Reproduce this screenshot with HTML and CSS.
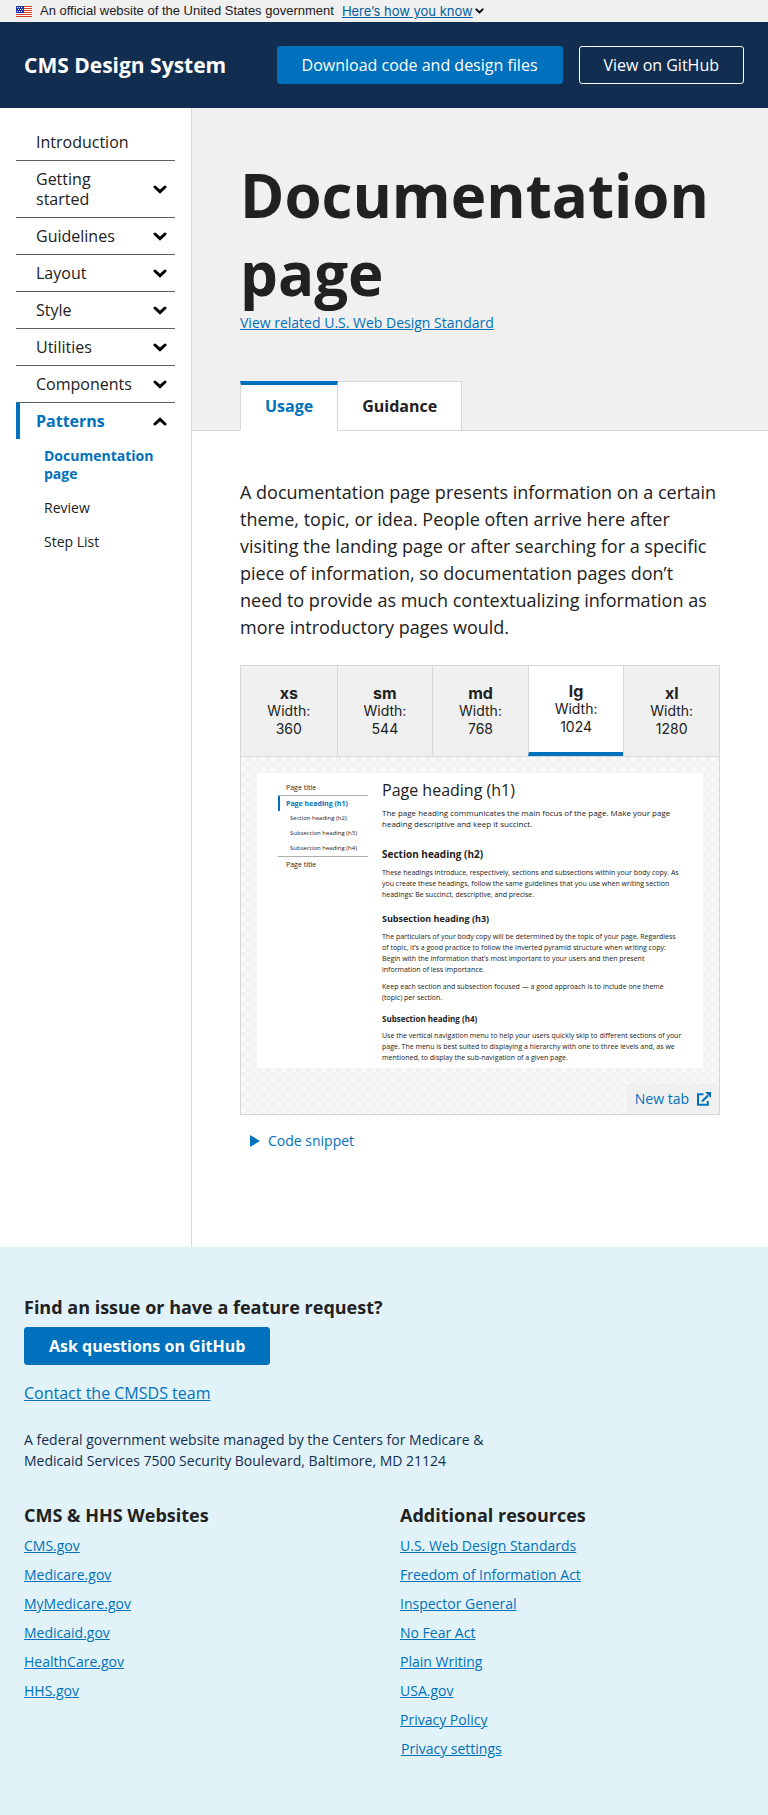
FILE: index.html
```html
<!DOCTYPE html>
<html lang="en">
<head>
<meta charset="utf-8">
<meta name="viewport" content="width=device-width, initial-scale=1">
<title>Documentation page - CMS Design System</title>
<link rel="stylesheet" href="styles.css">
</head>
<body>
<svg class="sprite" aria-hidden="true">
  <symbol id="chevron" viewBox="0 0 14 9"><path d="M2 2l5 4.6L12 2" fill="none" stroke="currentColor" stroke-width="3" stroke-linecap="round" stroke-linejoin="miter"/></symbol>
</svg>

<section class="gov-banner" aria-label="Official government website">
  <svg class="flag" viewBox="0 0 16 11" aria-hidden="true">
    <path fill="#fff" d="M0 0h16v11H0z"/>
    <path fill="#db3e1f" d="M8 0h8v1H8zM8 2h8v1H8zM8 4h8v1H8zM8 6h8v1H8zM0 8h16v1H0zM0 10h16v1H0z"/>
    <path fill="#1e33b1" d="M0 0h8v7H0z"/>
    <path fill="#fff" d="M1 1h1v1H1zM3 1h1v1H3zM5 1h1v1H5zM2 3h1v1H2zM4 3h1v1H4zM6 3h1v1H6zM1 5h1v1H1zM3 5h1v1H3zM5 5h1v1H5z"/>
  </svg>
  <span>An official website of the United States government</span>
  <button class="banner-button" type="button"><span>Here’s how you know</span><svg class="banner-chevron" aria-hidden="true"><use href="#chevron"/></svg></button>
</section>

<header class="site-header">
  <a class="site-title" href="#">CMS Design System</a>
  <div class="header-actions">
    <a class="button button-solid" href="#">Download code and design files</a>
    <a class="button button-outline" href="#">View on GitHub</a>
  </div>
</header>

<div class="layout">
  <nav class="sidebar" aria-label="Main">
    <ul class="nav-list">
      <li><a class="nav-item" href="#">Introduction</a></li>
      <li><button class="nav-item" type="button"><span>Getting started</span><svg class="chevron" aria-hidden="true"><use href="#chevron"/></svg></button></li>
      <li><button class="nav-item" type="button"><span>Guidelines</span><svg class="chevron" aria-hidden="true"><use href="#chevron"/></svg></button></li>
      <li><button class="nav-item" type="button"><span>Layout</span><svg class="chevron" aria-hidden="true"><use href="#chevron"/></svg></button></li>
      <li><button class="nav-item" type="button"><span>Style</span><svg class="chevron" aria-hidden="true"><use href="#chevron"/></svg></button></li>
      <li><button class="nav-item" type="button"><span>Utilities</span><svg class="chevron" aria-hidden="true"><use href="#chevron"/></svg></button></li>
      <li><button class="nav-item" type="button"><span>Components</span><svg class="chevron" aria-hidden="true"><use href="#chevron"/></svg></button></li>
      <li>
        <button class="nav-item nav-current" type="button" aria-expanded="true"><span>Patterns</span><svg class="chevron chevron-up" aria-hidden="true"><use href="#chevron"/></svg></button>
        <ul class="subnav">
          <li><a class="subnav-item subnav-current" href="#" aria-current="page">Documentation page</a></li>
          <li><a class="subnav-item" href="#">Review</a></li>
          <li><a class="subnav-item" href="#">Step List</a></li>
        </ul>
      </li>
    </ul>
  </nav>

  <main class="main">
    <div class="page-header">
      <h1 class="page-title">Documentation page</h1>
      <p class="related"><a href="#">View related U.S. Web Design Standard</a></p>
      <div class="tabs" role="tablist">
        <a class="tab tab-selected" role="tab" aria-selected="true" href="#">Usage</a>
        <a class="tab" role="tab" aria-selected="false" href="#">Guidance</a>
      </div>
    </div>
    <div class="page-body">
      <p class="lead">A documentation page presents information on a certain theme, topic, or idea. People often arrive here after visiting the landing page or after searching for a specific piece of information, so documentation pages don’t need to provide as much contextualizing information as more introductory pages would.</p>

      <section class="example" aria-label="Responsive example">
        <div class="breakpoints">
          <button class="breakpoint" type="button"><strong>xs</strong><span>Width: 360</span></button>
          <button class="breakpoint" type="button"><strong>sm</strong><span>Width: 544</span></button>
          <button class="breakpoint" type="button"><strong>md</strong><span>Width: 768</span></button>
          <button class="breakpoint breakpoint-selected" type="button"><strong>lg</strong><span>Width: 1024</span></button>
          <button class="breakpoint" type="button"><strong>xl</strong><span>Width: 1280</span></button>
        </div>
        <div class="stage">
          <div class="preview">
            <ul class="preview-nav">
              <li><a class="preview-link" href="#">Page title</a></li>
              <li class="preview-group">
                <a class="preview-link preview-current" href="#">Page heading (h1)</a>
                <ul class="preview-subnav">
                  <li><a href="#">Section heading (h2)</a></li>
                  <li><a href="#">Subsection heading (h3)</a></li>
                  <li><a href="#">Subsection heading (h4)</a></li>
                </ul>
              </li>
              <li><a class="preview-link" href="#">Page title</a></li>
            </ul>
            <article class="preview-article">
              <h2 class="preview-h1">Page heading (h1)</h2>
              <p class="preview-lead">The page heading communicates the main focus of the page. Make your page heading descriptive and keep it succinct.</p>
              <h3 class="preview-h2">Section heading (h2)</h3>
              <p>These headings introduce, respectively, sections and subsections within your body copy. As you create these headings, follow the same guidelines that you use when writing section headings: Be succinct, descriptive, and precise.</p>
              <h4 class="preview-h3">Subsection heading (h3)</h4>
              <p>The particulars of your body copy will be determined by the topic of your page. Regardless of topic, it’s a good practice to follow the inverted pyramid structure when writing copy: Begin with the information that’s most important to your users and then present information of less importance.</p>
              <p>Keep each section and subsection focused — a good approach is to include one theme (topic) per section.</p>
              <h5 class="preview-h4">Subsection heading (h4)</h5>
              <p>Use the vertical navigation menu to help your users quickly skip to different sections of your page. The menu is best suited to displaying a hierarchy with one to three levels and, as we mentioned, to display the sub-navigation of a given page.</p>
            </article>
          </div>
          <a class="new-tab" href="#">New tab
            <svg class="new-tab-icon" viewBox="0 0 14 14" aria-hidden="true"><path d="M6.500 2.200H1v10.600h9.800V9" fill="none" stroke="currentColor" stroke-width="2"/><path d="M5 9.500l6-6" stroke="currentColor" stroke-width="2.200"/><path d="M8 0h6v6z" fill="currentColor"/></svg>
          </a>
        </div>
      </section>

      <button class="snippet" type="button"><svg class="snippet-icon" viewBox="0 0 10 12" aria-hidden="true"><path d="M0 0l10 6-10 6z" fill="currentColor"/></svg>Code snippet</button>
    </div>
  </main>
</div>

<footer class="footer">
  <h2 class="footer-heading">Find an issue or have a feature request?</h2>
  <a class="button button-solid button-bold" href="#">Ask questions on GitHub</a>
  <p class="contact"><a href="#">Contact the CMSDS team</a></p>
  <p class="address">A federal government website managed by the Centers for Medicare &amp; Medicaid Services 7500 Security Boulevard, Baltimore, MD 21124</p>
  <div class="footer-columns">
    <div>
      <h2 class="footer-heading">CMS &amp; HHS Websites</h2>
      <ul class="footer-links">
        <li><a href="#">CMS.gov</a></li>
        <li><a href="#">Medicare.gov</a></li>
        <li><a href="#">MyMedicare.gov</a></li>
        <li><a href="#">Medicaid.gov</a></li>
        <li><a href="#">HealthCare.gov</a></li>
        <li><a href="#">HHS.gov</a></li>
      </ul>
    </div>
    <div>
      <h2 class="footer-heading">Additional resources</h2>
      <ul class="footer-links">
        <li><a href="#">U.S. Web Design Standards</a></li>
        <li><a href="#">Freedom of Information Act</a></li>
        <li><a href="#">Inspector General</a></li>
        <li><a href="#">No Fear Act</a></li>
        <li><a href="#">Plain Writing</a></li>
        <li><a href="#">USA.gov</a></li>
        <li><a href="#">Privacy Policy</a></li>
        <li><button class="link-button" type="button">Privacy settings</button></li>
      </ul>
    </div>
  </div>
</footer>
</body>
</html>
```

FILE: styles.css
```css
:root {
  --blue: #0071bc;
  --navy: #112e51;
  --ink: #212121;
  --gray: #f0f0f0;
  --line: #d6d7d9;
}

*,
*::before,
*::after {
  box-sizing: border-box;
}

body {
  margin: 0;
  background: #fff;
  color: var(--ink);
  font-family: "Open Sans", sans-serif;
  font-size: 16px;
  line-height: 24px;
}

h1, h2, h3, h4, h5, p, ul {
  margin: 0;
  padding: 0;
}

ul {
  list-style: none;
}

a {
  color: var(--blue);
}

button {
  margin: 0;
  padding: 0;
  border: 0;
  background: none;
  color: inherit;
  font: inherit;
  cursor: pointer;
}

.sprite {
  display: none;
}

/* Government banner */
.gov-banner {
  display: flex;
  align-items: center;
  gap: 8px;
  min-height: 22px;
  padding: 0 16px;
  background: var(--gray);
  font-family: "Liberation Sans", Arial, sans-serif;
  font-size: 13px;
  line-height: 22px;
}

.flag {
  flex: none;
  width: 16px;
  height: 11px;
}

.banner-button {
  display: flex;
  align-items: center;
  gap: 2px;
  color: #000;
  font-family: Inter, sans-serif;
}

.banner-button span {
  color: #005ea2;
  text-decoration: underline;
}

.banner-chevron {
  width: 9px;
  height: 6px;
}

/* Header */
.site-header {
  display: flex;
  align-items: center;
  justify-content: space-between;
  gap: 16px;
  padding: 24px;
  background: var(--navy);
}

.site-title {
  color: #fff;
  font-size: 21px;
  font-weight: 700;
  text-decoration: none;
}

.header-actions {
  display: flex;
  gap: 16px;
}

.button {
  display: inline-block;
  padding: 8px 24px;
  border: 1px solid var(--blue);
  border-radius: 3px;
  color: #fff;
  font-size: 16px;
  line-height: 20px;
  text-decoration: none;
}

.button-solid {
  background: var(--blue);
}

.button-outline {
  border-color: #fff;
}

.button-bold {
  font-weight: 700;
}

/* Page layout */
.layout {
  display: grid;
  grid-template-columns: 192px minmax(0, 1fr);
}

.sidebar {
  padding: 16px 16px 0;
  border-right: 1px solid var(--line);
}

.nav-list > li + li {
  border-top: 1px solid #5b616b;
}

.nav-item {
  display: flex;
  align-items: center;
  justify-content: space-between;
  gap: 16px;
  width: 100%;
  padding: 8px 8px 8px 20px;
  color: var(--ink);
  line-height: 20px;
  text-align: left;
  text-decoration: none;
}

.nav-current {
  padding-left: 16px;
  border-left: 4px solid var(--blue);
  color: var(--blue);
  font-weight: 700;
}

.chevron {
  flex: none;
  width: 14px;
  height: 9px;
  color: #000;
}

.chevron-up {
  transform: rotate(180deg);
}

.subnav {
  padding-top: 0;
}

.subnav-item {
  display: block;
  padding: 8px 8px 8px 28px;
  color: var(--ink);
  font-size: 14px;
  line-height: 18px;
  text-decoration: none;
}

.subnav-current {
  color: var(--blue);
  font-weight: 700;
}

.page-header {
  padding: 48px 48px 0;
  border-bottom: 1px solid var(--line);
  background: var(--gray);
}

.page-title {
  font-size: 60px;
  font-weight: 700;
  line-height: 78px;
}

.related {
  font-size: 14px;
  line-height: 21px;
}

.tabs {
  display: flex;
  margin-top: 48px;
  margin-bottom: -1px;
}

.tab {
  padding: 12px 24px;
  border: 1px solid var(--line);
  background: #fff;
  color: var(--ink);
  font-weight: 700;
  line-height: 24px;
  text-decoration: none;
}

.tab + .tab {
  border-left: 0;
}

.tab-selected {
  padding-top: 9px;
  border-top: 4px solid var(--blue);
  border-bottom-color: #fff;
  color: var(--blue);
}

.page-body {
  padding: 48px 48px 94px;
}

.lead {
  font-size: 18px;
  line-height: 27px;
}

/* Responsive example */
.example {
  margin-top: 24px;
  border: 1px solid var(--line);
}

.breakpoints {
  display: grid;
  grid-template-columns: repeat(5, 1fr);
  border-bottom: 1px solid var(--line);
}

.breakpoint {
  display: flex;
  flex-direction: column;
  align-items: center;
  justify-content: center;
  min-height: 90px;
  padding: 0 24px;
  background: var(--gray);
  font-family: Inter, sans-serif;
  font-size: 14px;
  line-height: 18px;
}

.breakpoint + .breakpoint {
  border-left: 1px solid var(--line);
}

.breakpoint strong {
  font-size: 16px;
}

.breakpoint-selected {
  border-bottom: 4px solid var(--blue);
  background: #fff;
}

.stage {
  display: flex;
  flex-direction: column;
  gap: 16px;
  padding: 16px 0 0;
  background: repeating-conic-gradient(#f2f2f2 0 25%, #f8f8f8 0 50%) 0 0 / 10px 10px;
}

.preview {
  display: grid;
  grid-template-columns: 90px minmax(0, 1fr);
  gap: 14px;
  margin: 0 16px;
  padding: 7px 20px 5px 21px;
  background: #fff;
  font-size: 7px;
  line-height: 11px;
}

.preview a {
  display: block;
  color: var(--ink);
  text-decoration: none;
}

.preview .preview-link {
  padding: 2px 0 2px 8px;
}

.preview-group {
  border-top: 1px solid #aeb0b5;
  border-bottom: 1px solid #aeb0b5;
}

.preview .preview-current {
  padding-left: 6px;
  border-left: 2px solid var(--blue);
  color: var(--blue);
  font-weight: 700;
}

.preview-subnav a {
  padding: 2px 0 2px 12px;
  font-size: 6px;
}

.preview-h1 {
  font-size: 16px;
  font-weight: 400;
  line-height: 20px;
}

.preview-lead {
  margin-top: 7px;
  font-size: 8px;
}

.preview-article p + p {
  margin-top: 6px;
}

.preview-h2 {
  margin: 19px 0 6px;
  font-size: 10px;
  line-height: 13px;
}

.preview-h3 {
  margin: 13px 0 6px;
  font-size: 9px;
  line-height: 12px;
}

.preview-h4 {
  margin: 10px 0 6px;
  font-size: 8px;
  line-height: 11px;
}

.new-tab {
  display: flex;
  align-items: center;
  align-self: flex-end;
  gap: 8px;
  padding: 3px 8px;
  background: var(--gray);
  font-size: 14px;
  line-height: 24px;
  text-decoration: none;
}

.new-tab-icon {
  width: 14px;
  height: 14px;
}

.snippet {
  display: flex;
  align-items: center;
  gap: 8px;
  margin-top: 14px;
  padding: 0 10px;
  color: var(--blue);
  font-size: 14px;
}

.snippet-icon {
  width: 10px;
  height: 12px;
}

/* Footer */
.footer {
  padding: 48px 24px 56px;
  background: #e1f3f8;
}

.footer-heading {
  margin-bottom: 8px;
  font-size: 18px;
  line-height: 24px;
}

.footer .button {
  vertical-align: top;
}

.contact {
  margin-top: 16px;
}

.address {
  max-width: 480px;
  margin-top: 24px;
  color: var(--navy);
  font-size: 14px;
  line-height: 21px;
}

.footer-columns {
  display: grid;
  grid-template-columns: 1fr 1fr;
  gap: 32px;
  margin-top: 32px;
}

.footer-links {
  display: grid;
  gap: 8px;
  font-size: 14px;
  line-height: 21px;
}

.link-button {
  display: block;
  padding: 0 1px;
  color: var(--blue);
  text-decoration: underline;
}
```
